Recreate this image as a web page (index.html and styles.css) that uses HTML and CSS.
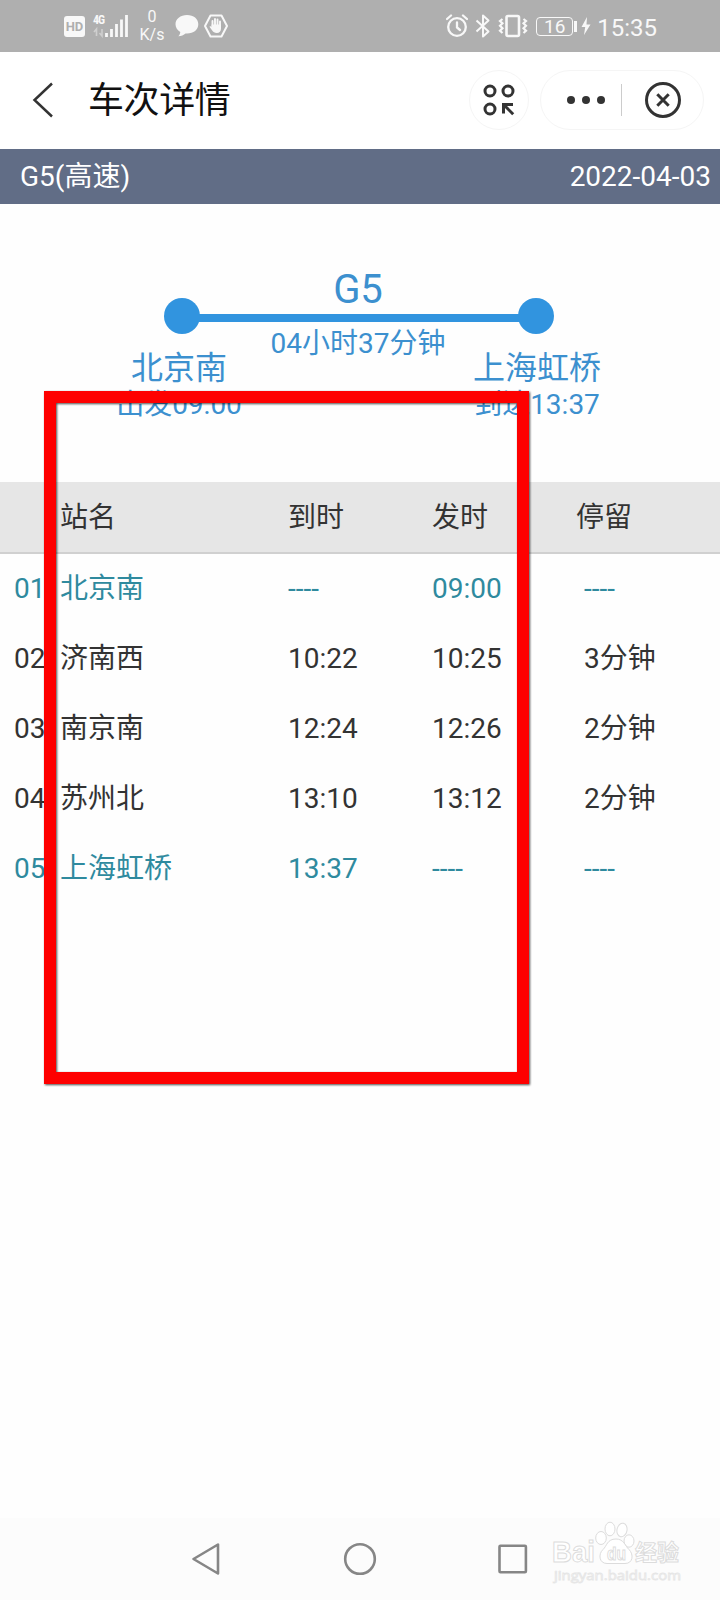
FILE: index.html
```html
<!DOCTYPE html>
<html lang="zh-CN">
<head>
  <meta charset="UTF-8" />
  <title>车次详情</title>
  <link rel="stylesheet" href="styles.css">
</head>
<body>

  <div class="screen">
    <!-- Status bar -->
    <div class="status-bar">
      <div class="status-left">
        <span class="hd">HD</span>
        <div class="signal">
          <span class="net">4G</span>
          <svg width="36" height="24" viewBox="0 0 36 24">
            <path d="M2 18l2.500-3v7M10 15v7l-2.500-3" fill="none" stroke="#cfcfcf" stroke-width="1.600"/>
            <path d="M14.500 19v4M19.500 15v8M24.500 10v13M29.500 5.500v17.500M34.500 1v22" stroke="#f8f8f8" stroke-width="2.800" stroke-linecap="butt"/>
          </svg>
        </div>
        <div class="speed"><span>0</span><span>K/s</span></div>
        <svg class="bubble" width="24" height="22" viewBox="0 0 24 22">
          <path d="M12 0C5.400 0 .5 4 .5 9.200c0 3.300 1.900 6 4.800 7.700-.2 1.900-.9 3.300-2 4.300 3 0 5.500-1.200 7.200-2.800l1.500.1c6.600 0 11.300-4 11.300-9.300S18.600 0 12 0z" fill="#f8f8f8"/>
        </svg>
        <svg class="hand" width="26" height="24" viewBox="0 0 26 24">
          <path d="M7.500 1.500h11l5.500 10.500-5.500 10.500h-11L2 12z" fill="none" stroke="#f8f8f8" stroke-width="2" stroke-linejoin="round"/>
          <path d="M9.500 12V7M12 11V5M14.500 11V5.500M17 12V7.500" stroke="#f8f8f8" stroke-width="1.900" stroke-linecap="round"/>
          <path d="M8.600 10.500H18v4c0 2.800-1.600 4.500-4.200 4.500-2.300 0-3.500-1-4.800-2.800L6.500 12.700c.7-.8 1.500-.5 2.100.1z" fill="#f8f8f8"/>
        </svg>
      </div>
      <div class="status-right">
        <svg width="22" height="24" viewBox="0 0 22 24">
          <g fill="none" stroke="#f8f8f8" stroke-width="2.300" stroke-linecap="round">
            <circle cx="11" cy="13" r="8.800"/>
            <path d="M11 8.500v5l3 2.500M1 5l4-3.500M21 5l-4-3.500"/>
          </g>
        </svg>
        <svg class="bt" width="16" height="24" viewBox="0 0 16 24">
          <path d="M1.500 6.500l12 11L8 22.500v-21l5.500 5-12 11" fill="none" stroke="#f8f8f8" stroke-width="2" stroke-linejoin="round"/>
        </svg>
        <svg class="vibrate" width="30" height="24" viewBox="0 0 30 24">
          <rect x="8.500" y="2" width="12.500" height="20" rx="1.500" fill="none" stroke="#f8f8f8" stroke-width="2.600"/>
          <path d="M4.500 5l-2.500 2 2.500 2.300-2.500 2.500 2.500 2.500-2.500 2.500 2.500 2.200M25.500 5l2.500 2-2.500 2.300 2.500 2.500-2.500 2.500 2.500 2.500-2.500 2.200" fill="none" stroke="#f8f8f8" stroke-width="2.200"/>
        </svg>
        <span class="battery">16</span>
        <span class="battery-cap"></span>
        <svg class="bolt" width="10" height="18" viewBox="0 0 10 18">
          <path d="M6 0L.5 10h3.700L3 18l6.500-10.500H5.500z" fill="#f8f8f8"/>
        </svg>
        <span class="clock">15:35</span>
      </div>
    </div>

    <!-- Title bar -->
    <div class="title-bar">
      <svg class="back" width="22" height="36" viewBox="0 0 22 36">
        <path d="M20 1.500L2.500 18 20 34.500" fill="none" stroke="#333" stroke-width="2.500"/>
      </svg>
      <h1>车次详情</h1>
      <div class="round-btn">
        <svg width="32" height="32" viewBox="0 0 32 32">
          <g fill="none" stroke="#333" stroke-width="3">
            <circle cx="7" cy="7" r="5"/>
            <circle cx="25" cy="7" r="5"/>
            <circle cx="7" cy="25" r="5"/>
            <path d="M20.500 29.500v-9H30M20.800 20.800l9.400 9.400"/>
          </g>
        </svg>
      </div>
      <div class="capsule">
        <svg class="dots" width="38" height="8" viewBox="0 0 38 8">
          <g fill="#333"><circle cx="4" cy="4" r="4"/><circle cx="19" cy="4" r="4"/><circle cx="34" cy="4" r="4"/></g>
        </svg>
        <span class="divider"></span>
        <svg class="close" width="36" height="36" viewBox="0 0 36 36">
          <circle cx="18" cy="18" r="16.500" fill="none" stroke="#333" stroke-width="3"/>
          <path d="M12.300 12.300l11.400 11.400M23.700 12.300L12.300 23.700" stroke="#333" stroke-width="3"/>
        </svg>
      </div>
    </div>

    <div class="train-bar">
      <span>G5(高速)</span>
      <span>2022-04-03</span>
    </div>

    <!-- Route summary -->
    <div class="route">
      <div class="route-name">G5</div>
      <div class="track">
        <span class="dot"></span>
        <span class="line"></span>
        <span class="dot"></span>
      </div>
      <div class="duration">04小时37分钟</div>
      <div class="ends">
        <div>
          <p class="city">北京南</p>
          <p class="time">出发09:00</p>
        </div>
        <div>
          <p class="city">上海虹桥</p>
          <p class="time">到达13:37</p>
        </div>
      </div>
    </div>

    <!-- Stops -->
    <div class="stops">
      <div class="row head"><span></span><span>站名</span><span>到时</span><span>发时</span><span>停留</span></div>
      <div class="row end"><span>01</span><span>北京南</span><span>----</span><span>09:00</span><span>----</span></div>
      <div class="row"><span>02</span><span>济南西</span><span>10:22</span><span>10:25</span><span>3分钟</span></div>
      <div class="row"><span>03</span><span>南京南</span><span>12:24</span><span>12:26</span><span>2分钟</span></div>
      <div class="row"><span>04</span><span>苏州北</span><span>13:10</span><span>13:12</span><span>2分钟</span></div>
      <div class="row end"><span>05</span><span>上海虹桥</span><span>13:37</span><span>----</span><span>----</span></div>
    </div>

    <!-- System navigation -->
    <div class="nav-bar">
      <svg width="30" height="34" viewBox="0 0 30 34">
        <path d="M27 2.500v29L2.500 17z" fill="none" stroke="#868686" stroke-width="2.600" stroke-linejoin="round"/>
      </svg>
      <svg width="34" height="34" viewBox="0 0 34 34">
        <circle cx="17" cy="17" r="14.800" fill="none" stroke="#868686" stroke-width="2.600"/>
      </svg>
      <svg width="32" height="30" viewBox="0 0 32 30">
        <rect x="1.500" y="1.800" width="26.400" height="26.400" rx="1" fill="none" stroke="#868686" stroke-width="2.600"/>
      </svg>
    </div>

    <div class="highlight"></div>

    <svg class="watermark" width="136" height="64" viewBox="0 0 136 64">
      <g class="wm-shape">
        <ellipse cx="51" cy="18" rx="5.300" ry="6.500"/>
        <ellipse cx="60" cy="9" rx="5" ry="6.800"/>
        <ellipse cx="72" cy="10" rx="5" ry="6.800" transform="rotate(12 72 10)"/>
        <ellipse cx="79" cy="21" rx="5" ry="6.200"/>
        <path d="M66 19c-9 0-9 7-13 10.500-5 4.500-4 14 4 14h18c8 0 9-9 4-14C75 26 74 19 66 19z"/>
      </g>
      <text class="wm-text" x="2" y="42" font-size="29" textLength="43" lengthAdjust="spacingAndGlyphs">Bai</text>
      <text class="wm-text" x="57" y="40" font-size="19" textLength="19" lengthAdjust="spacingAndGlyphs">du</text>
      <text class="wm-text" x="85" y="40" font-size="22" textLength="44">经验</text>
      <text class="wm-url" x="4" y="60" font-size="13" textLength="127" lengthAdjust="spacingAndGlyphs">jingyan.baidu.com</text>
    </svg>
  </div>

</body>
</html>
```

FILE: styles.css
```css
* {
  box-sizing: border-box;
}

body {
  margin: 0;
  font-family: Roboto, "Noto Sans CJK SC", sans-serif;
  color: #333;
  background: #fefefe;
}

h1, p {
  margin: 0;
  font-weight: normal;
}

svg {
  display: block;
  flex: none;
}

.screen {
  position: relative;
  display: flex;
  flex-direction: column;
  width: 720px;
  height: 1600px;
  overflow: hidden;
}

/* status bar */
.status-bar {
  display: flex;
  justify-content: space-between;
  height: 52px;
  padding: 0 63px 0 64px;
  background: #afafaf;
  color: #f8f8f8;
}

.status-left,
.status-right {
  display: flex;
  align-items: center;
}

.hd {
  width: 21px;
  height: 21px;
  border-radius: 3px;
  background: #f8f8f8;
  color: #afafaf;
  font-size: 13px;
  font-weight: bold;
  line-height: 22px;
  text-align: center;
}

.signal {
  display: flex;
  position: relative;
  margin-left: 7px;
}

.net {
  position: absolute;
  left: 1px;
  top: 0;
  font-family: "Roboto Condensed", Roboto, sans-serif;
  font-size: 12px;
  font-weight: bold;
  line-height: 12px;
  letter-spacing: -1px;
}

.speed {
  display: flex;
  flex-direction: column;
  width: 26px;
  margin-left: 11px;
  font-size: 16px;
  line-height: 18px;
  text-align: center;
}

.bubble {
  margin-left: 10px;
}

.hand {
  margin-left: 4px;
}

.bt {
  margin-left: 7px;
}

.vibrate {
  margin-left: 7px;
}

.battery {
  width: 37px;
  height: 19px;
  margin-left: 8px;
  border: 1px solid #f8f8f8;
  border-radius: 4px;
  font-size: 19px;
  line-height: 18px;
  text-align: center;
}

.battery-cap {
  width: 3px;
  height: 11px;
  margin-left: 1px;
  background: #f8f8f8;
}

.bolt {
  margin: 0 6px 0 4px;
}

.clock {
  margin-top: 3px;
  font-size: 24px;
  line-height: 26px;
}

/* title bar */
.title-bar {
  display: flex;
  align-items: center;
  height: 97px;
  padding: 0 16px 2px 32px;
  background: #fff;
}

.title-bar h1 {
  margin: 2px 0 0 34px;
  font-size: 36px;
  line-height: 40px;
  letter-spacing: -0.4px;
  color: #111;
}

.round-btn {
  display: flex;
  align-items: center;
  justify-content: center;
  width: 60px;
  height: 60px;
  margin-left: auto;
  border: 1px solid #f5f5f5;
  border-radius: 50%;
}

.capsule {
  display: flex;
  align-items: center;
  width: 164px;
  height: 60px;
  margin-left: 11px;
  border: 1px solid #f5f5f5;
  border-radius: 30px;
}

.dots {
  margin-left: 26px;
}

.divider {
  width: 1px;
  height: 32px;
  margin: 0 23px 0 16px;
  background: #ccc;
}

.train-bar {
  display: flex;
  justify-content: space-between;
  height: 55px;
  padding: 0 9px 0 20px;
  background: #616d86;
  color: #fff;
  font-size: 28px;
  line-height: 55px;
}

/* route summary */
.route {
  height: 278px;
  padding-top: 66px;
  color: #3c90cf;
}

.route-name,
.duration {
  width: 716px;
  text-align: center;
}

.route-name {
  font-size: 40px;
  line-height: 40px;
}

.track {
  display: flex;
  align-items: center;
  width: 390px;
  margin: -12px 0 0 164px;
}

.dot {
  width: 36px;
  height: 36px;
  border-radius: 50%;
  background: #3194df;
}

.line {
  flex: 1;
  height: 8px;
  margin: 4px -2px 0;
  background: #3194df;
}

.duration {
  margin-top: -4px;
  font-size: 28px;
  line-height: 28px;
}

.ends {
  display: grid;
  grid-template-columns: 358px 358px;
  margin-top: -8px;
  text-align: center;
}

.city {
  font-size: 32px;
  line-height: 36px;
}

.time {
  margin-top: 5px;
  font-size: 28px;
  line-height: 28px;
}

/* stops */
.stops {
  flex: 1;
}

.row {
  display: grid;
  grid-template-columns: 46px 228px 144px 152px 1fr;
  height: 70px;
  padding-left: 14px;
  font-size: 28px;
  line-height: 69px;
}

.head {
  grid-template-columns: 46px 228px 144px 144px 1fr;
  height: 72px;
  line-height: 71px;
  border-bottom: 2px solid #d0d0d0;
  background: #e6e6e6;
}

.end {
  color: #2f8a9e;
}

/* system navigation */
.nav-bar {
  display: grid;
  grid-template-columns: 154px 154px 154px;
  justify-content: center;
  justify-items: center;
  align-items: center;
  height: 82px;
  background: #fcfcfc;
}

/* red frame over the stop list */
.highlight {
  position: absolute;
  left: 44px;
  top: 391px;
  width: 485px;
  height: 693px;
  border: 12px solid #fe0000;
  filter: drop-shadow(1px 1px 1px rgba(0, 0, 0, 0.7));
}

.watermark {
  position: absolute;
  left: 550px;
  top: 1520px;
}

.wm-shape,
.wm-text {
  fill: #fff;
  stroke: #dcdcdc;
  stroke-width: 1;
}

.wm-text {
  font-family: "Liberation Sans", "Noto Sans CJK SC", sans-serif;
  font-weight: bold;
}

.wm-url {
  fill: #fff;
  stroke: #e6e6e6;
  stroke-width: 0.8;
  font-family: "Open Sans", sans-serif;
}
```
